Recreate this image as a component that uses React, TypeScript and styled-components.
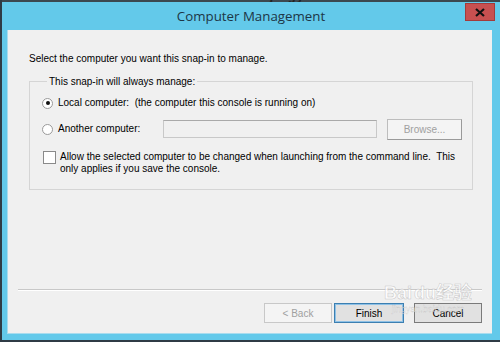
import React from 'react';
import styled, { createGlobalStyle } from 'styled-components';

const GlobalStyle = createGlobalStyle`
  html, body {
    margin: 0;
    padding: 0;
    background: #2b3640;
  }
  body {
    font-family: "Liberation Sans", Arial, sans-serif;
  }
`;

export default function App() {
  return (
    <>
      <GlobalStyle />
      <Window>
        <BehindStrip>
          <BehindText>www.jingyan.baidu.com</BehindText>
        </BehindStrip>
        <TitleBar>
          <span />
          <Title>Computer Management</Title>
          <CloseButton aria-label="Close">
            <svg width="10" height="9" viewBox="0 0 10 9">
              <path d="M1 1 L9 8 M9 1 L1 8" stroke="#111" strokeWidth="2.2" />
            </svg>
          </CloseButton>
        </TitleBar>
        <Client>
          <Intro>Select the computer you want this snap-in to manage.</Intro>
          <GroupBox>
            <Legend>This snap-in will always manage:</Legend>
            <OptionRow>
              <Radio $checked />
              <Label>Local computer:&nbsp; (the computer this console is running on)</Label>
            </OptionRow>
            <OptionRow>
              <Radio />
              <Label $width={105}>Another computer:</Label>
              <TextBox />
              <SmallButton disabled>Browse...</SmallButton>
            </OptionRow>
            <CheckRow>
              <CheckBox />
              <Label>
                Allow the selected computer to be changed when launching from the command line.&nbsp; This
                <br />
                only applies if you save the console.
              </Label>
            </CheckRow>
          </GroupBox>
          <Spacer />
          <Separator />
          <ButtonRow>
            <DialogButton disabled>&lt; Back</DialogButton>
            <DialogButton $default>Finish</DialogButton>
            <DialogButton $gapLeft={10}>Cancel</DialogButton>
          </ButtonRow>
          <Watermark>
            <WatermarkLogo>Bai<Paw>du</Paw>经验</WatermarkLogo>
            <WatermarkUrl>jingyan.baidu.com</WatermarkUrl>
          </Watermark>
        </Client>
      </Window>
    </>
  );
}

const Window = styled.div`
  width: 500px;
  height: 342px;
  box-sizing: border-box;
  background: #63c9ea;
  border-left: 2px solid #2f3b45;
  border-bottom: 2px solid #2f3b45;
  display: flex;
  flex-direction: column;
  overflow: hidden;
`;

const BehindStrip = styled.div`
  height: 2px;
  background: #3c4850;
  overflow: hidden;
  position: relative;
`;

const BehindText = styled.div`
  position: absolute;
  left: 230px;
  top: -12px;
  font-size: 13px;
  font-weight: bold;
  color: #222;
  letter-spacing: 1px;
`;

const TitleBar = styled.div`
  height: 28px;
  display: grid;
  grid-template-columns: 1fr auto 1fr;
  align-items: start;
`;

const Title = styled.div`
  font-family: "Open Sans", "Liberation Sans", sans-serif;
  font-size: 13.3px;
  color: #1d3646;
  padding-top: 5px;
`;

const CloseButton = styled.div`
  justify-self: end;
  margin: 1px 5px 0 0;
  width: 30px;
  height: 18px;
  box-sizing: border-box;
  background: #c75050;
  border: 1px solid #a33b3b;
  display: flex;
  align-items: center;
  justify-content: center;
`;

const Client = styled.div`
  position: relative;
  flex: 1;
  margin: 0 8px 6px 5px;
  background: #f0f0f0;
  border-left: 1px solid #a9dcee;
  border-bottom: 1px solid #a9dcee;
  display: flex;
  flex-direction: column;
  padding: 22px 10px 10px 21px;
  font-size: 10px;
  color: #000;
  white-space: nowrap;
`;

const Intro = styled.div`
  line-height: 13px;
`;

const GroupBox = styled.fieldset`
  margin: 10px 0 0 0;
  width: 443px;
  box-sizing: border-box;
  border: 1px solid #d5d5d5;
  border-radius: 0;
  padding: 2px 10px 14px 12px;
  display: flex;
  flex-direction: column;
`;

const Legend = styled.legend`
  padding: 0 2px;
  margin-left: 5px;
  font-size: 10px;
  line-height: 13px;
`;

const OptionRow = styled.div`
  display: flex;
  align-items: center;
  height: 26px;
`;

const CheckRow = styled.div`
  display: flex;
  align-items: flex-start;
  margin-top: 9px;
`;

const Radio = styled.span<{ $checked?: boolean }>`
  width: 11px;
  height: 11px;
  box-sizing: border-box;
  border-radius: 50%;
  border: 1px solid #9a9a9a;
  background: #fff;
  margin-right: 5px;
  flex: none;
  position: relative;
  &::after {
    content: '';
    display: ${(p) => (p.$checked ? 'block' : 'none')};
    position: absolute;
    left: 2.5px;
    top: 2.5px;
    width: 4px;
    height: 4px;
    border-radius: 50%;
    background: #111;
  }
`;

const CheckBox = styled.span`
  width: 13px;
  height: 13px;
  box-sizing: border-box;
  border: 1px solid #8a8a8a;
  background: #fff;
  margin: 0 4px 0 1px;
  flex: none;
`;

const Label = styled.span<{ $width?: number }>`
  line-height: 12px;
  ${(p) => (p.$width ? `width: ${p.$width}px; flex: none;` : '')}
`;

const TextBox = styled.div`
  width: 214px;
  height: 18px;
  box-sizing: border-box;
  border: 1px solid #c8c8c8;
  border-top-color: #a9a9a9;
  background: #f0f0f0;
`;

const SmallButton = styled.button`
  margin-left: 10px;
  width: 75px;
  height: 21px;
  box-sizing: border-box;
  border: 1px solid #bdbdbd;
  border-right-color: #9a9a9a;
  border-bottom-color: #9a9a9a;
  background: #f4f4f4;
  color: #a0a0a0;
  font-family: "Liberation Sans", Arial, sans-serif;
  font-size: 10px;
  padding: 0;
`;

const Spacer = styled.div`
  flex: 1;
`;

const Separator = styled.div`
  margin-left: -11px;
  width: 464px;
  height: 1px;
  background: #c8c8c8;
  border-bottom: 1px solid #fff;
`;

const ButtonRow = styled.div`
  display: flex;
  justify-content: flex-end;
  margin-top: 12px;
  padding-right: 0;
`;

const DialogButton = styled.button<{ $default?: boolean; $gapLeft?: number }>`
  width: 68px;
  height: 20px;
  margin-left: ${(p) => p.$gapLeft ?? 2}px;
  box-sizing: border-box;
  padding: 0;
  font-family: "Liberation Sans", Arial, sans-serif;
  font-size: 10px;
  color: #000;
  background: #e1e1e1;
  border: 1px solid ${(p) => (p.$default ? '#3c7fb1' : '#7a7a7a')};
  ${(p) => (p.$default ? 'box-shadow: inset 0 0 0 1px #8ec1e6; width: 70px;' : '')}
  &:disabled {
    color: #a0a0a0;
    background: #f4f4f4;
    border-color: #c8c8c8;
  }
`;

const Watermark = styled.div`
  position: absolute;
  left: 376px;
  top: 248px;
  display: flex;
  flex-direction: column;
  align-items: center;
  pointer-events: none;
`;

const WatermarkLogo = styled.div`
  font-family: "Liberation Sans", "Noto Sans CJK SC", sans-serif;
  font-size: 18px;
  font-weight: bold;
  color: rgba(255, 255, 255, 0.75);
  -webkit-text-stroke: 0.5px rgba(150, 150, 150, 0.5);
`;

const Paw = styled.span`
  margin-left: 2px;
`;

const WatermarkUrl = styled.div`
  font-size: 9px;
  color: rgba(255, 255, 255, 0.7);
  -webkit-text-stroke: 0.3px rgba(150, 150, 150, 0.5);
  margin-top: 0;
`;
